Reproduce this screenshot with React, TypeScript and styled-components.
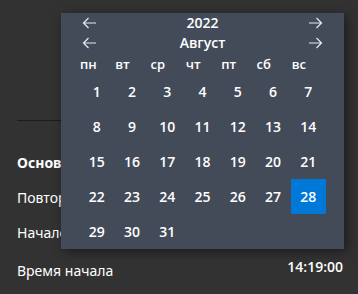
import React from 'react';
import styled, { createGlobalStyle } from 'styled-components';

const GlobalStyle = createGlobalStyle`
  body {
    margin: 0;
    background: #323232;
    font-family: "Noto Sans", "Open Sans", sans-serif;
    color: #ffffff;
  }
`;

const Page = styled.div`
  position: relative;
  width: 358px;
  height: 294px;
  overflow: hidden;
  padding: 0 15px 0 17px;
  box-sizing: border-box;
  display: flex;
  flex-direction: column;
`;

const Divider = styled.div`
  margin-top: 120px;
  height: 1px;
  background: #1c1c1c;
`;

const SectionTitle = styled.div`
  margin-top: 32px;
  width: 44px;
  overflow: hidden;
  white-space: nowrap;
  font-size: 14px;
  font-weight: 700;
  line-height: 20px;
`;

const Row = styled.div<{ $gap: number }>`
  margin-top: ${(p) => p.$gap}px;
  display: flex;
  justify-content: space-between;
  align-items: flex-start;
  font-size: 14px;
  line-height: 20px;
`;

const Label = styled.span<{ $drop?: number; $clip?: boolean }>`
  padding-top: ${(p) => p.$drop ?? 0}px;
  white-space: nowrap;
  overflow: hidden;
  max-width: ${(p) => (p.$clip ? '44px' : 'none')};
`;

const Value = styled.span`
  font-family: "Open Sans", "Noto Sans", sans-serif;
  font-weight: 600;
`;

const Popup = styled.div`
  position: absolute;
  left: 61px;
  top: 13px;
  width: 283px;
  height: 236px;
  padding: 0 18px;
  box-sizing: border-box;
  background: #434b59;
  box-shadow: 3px 3px 10px rgba(0, 0, 0, 0.45);
  display: flex;
  flex-direction: column;
  font-family: "Open Sans", "Noto Sans", sans-serif;
`;

const NavRow = styled.div<{ $h: number }>`
  height: ${(p) => p.$h}px;
  display: flex;
  align-items: center;
  justify-content: space-between;
  padding: 0 3px;
  font-size: 14px;
  font-weight: 600;
`;

const NavTitle = styled.span`
  line-height: 20px;
`;

const ArrowButton = styled.button`
  background: none;
  border: 0;
  padding: 0;
  width: 15px;
  height: 12px;
  display: flex;
  color: #e6e8ec;
`;

const WeekRow = styled.div`
  height: 21px;
  display: grid;
  grid-template-columns: repeat(7, 1fr);
  align-items: center;
  font-size: 13px;
  font-weight: 600;
`;

const WeekDay = styled.span`
  padding-left: 1px;
`;

const DaysGrid = styled.div`
  display: grid;
  grid-template-columns: repeat(7, 1fr);
  grid-auto-rows: 35px;
`;

const Day = styled.div<{ $selected?: boolean }>`
  display: flex;
  align-items: center;
  justify-content: center;
  font-size: 14px;
  font-weight: 600;
  background: ${(p) => (p.$selected ? '#0078d7' : 'transparent')};
`;

const Arrow: React.FC<{ dir: 'left' | 'right' }> = ({ dir }) => (
  <svg width="15" height="12" viewBox="0 0 15 12" fill="none">
    {dir === 'left' ? (
      <path d="M14 6H1.5M6.5 1L1.5 6l5 5" stroke="currentColor" strokeWidth="1.2" />
    ) : (
      <path d="M1 6h12.5M8.5 1l5 5-5 5" stroke="currentColor" strokeWidth="1.2" />
    )}
  </svg>
);

const weekDays = ['пн', 'вт', 'ср', 'чт', 'пт', 'сб', 'вс'];
const days = Array.from({ length: 31 }, (_, i) => i + 1);

const App: React.FC = () => {
  const selected = 28;

  return (
    <>
      <GlobalStyle />
      <Page>
        <Divider />
        <SectionTitle>Основные</SectionTitle>
        <Row $gap={15}>
          <Label $clip>Повторение</Label>
        </Row>
        <Row $gap={15}>
          <Label $clip>Начало</Label>
        </Row>
        <Row $gap={14}>
          <Label $drop={4}>Время начала</Label>
          <Value>14:19:00</Value>
        </Row>

        <Popup>
          <NavRow $h={20}>
            <ArrowButton><Arrow dir="left" /></ArrowButton>
            <NavTitle>2022</NavTitle>
            <ArrowButton><Arrow dir="right" /></ArrowButton>
          </NavRow>
          <NavRow $h={21}>
            <ArrowButton><Arrow dir="left" /></ArrowButton>
            <NavTitle>Август</NavTitle>
            <ArrowButton><Arrow dir="right" /></ArrowButton>
          </NavRow>
          <WeekRow>
            {weekDays.map((d) => (
              <WeekDay key={d}>{d}</WeekDay>
            ))}
          </WeekRow>
          <DaysGrid>
            {days.map((d) => (
              <Day key={d} $selected={d === selected}>{d}</Day>
            ))}
          </DaysGrid>
        </Popup>
      </Page>
    </>
  );
};

export default App;
